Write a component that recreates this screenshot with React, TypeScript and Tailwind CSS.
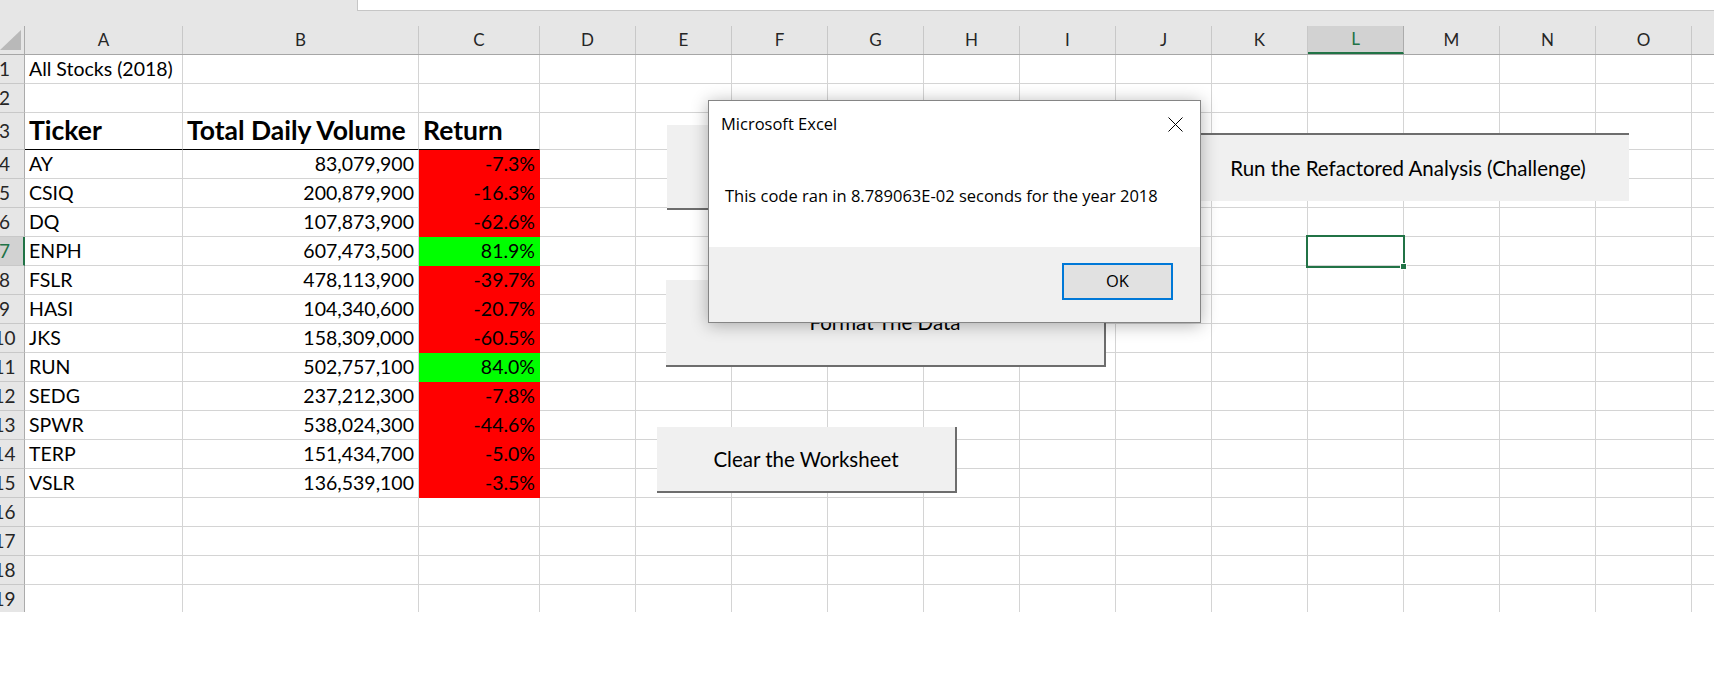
import React from 'react';

type Stock = { ticker: string; volume: string; ret: string; up?: boolean };

const STOCKS: Stock[] = [
  { ticker: 'AY', volume: '83,079,900', ret: '-7.3%' },
  { ticker: 'CSIQ', volume: '200,879,900', ret: '-16.3%' },
  { ticker: 'DQ', volume: '107,873,900', ret: '-62.6%' },
  { ticker: 'ENPH', volume: '607,473,500', ret: '81.9%', up: true },
  { ticker: 'FSLR', volume: '478,113,900', ret: '-39.7%' },
  { ticker: 'HASI', volume: '104,340,600', ret: '-20.7%' },
  { ticker: 'JKS', volume: '158,309,000', ret: '-60.5%' },
  { ticker: 'RUN', volume: '502,757,100', ret: '84.0%', up: true },
  { ticker: 'SEDG', volume: '237,212,300', ret: '-7.8%' },
  { ticker: 'SPWR', volume: '538,024,300', ret: '-44.6%' },
  { ticker: 'TERP', volume: '151,434,700', ret: '-5.0%' },
  { ticker: 'VSLR', volume: '136,539,100', ret: '-3.5%' },
];

// D..O share the same width
const EMPTY_COLS = ['D', 'E', 'F', 'G', 'H', 'I', 'J', 'K', 'L', 'M', 'N', 'O'];

const GRID = 'border-r border-b border-r-[#d4d4d4] border-b-[#d4d4d4]';

function RowHeader({ n, active }: { n: number; active?: boolean }) {
  return (
    <div
      className={`w-[25px] shrink-0 overflow-hidden border-b border-b-[#c8c8c8] text-[19px] ${
        active
          ? 'bg-[#d2d2d2] border-r-2 border-r-[#217346] text-[#217346]'
          : 'bg-[#e6e6e6] border-r border-r-[#ababab] text-[#262626]'
      }`}
    >
      <div className="w-[9px] h-full flex items-center justify-center whitespace-nowrap">{n}</div>
    </div>
  );
}

function EmptyCells({ n }: { n: number }) {
  return (
    <>
      {EMPTY_COLS.map((c) => (
        <div key={c + n} className={`w-[96px] shrink-0 ${GRID}`} />
      ))}
      <div className="flex-1 border-b border-b-[#d4d4d4]" />
    </>
  );
}

function SheetRow({ n, children, tall }: { n: number; children?: React.ReactNode; tall?: boolean }) {
  return (
    <div className={`flex ${tall ? 'h-[37px]' : 'h-[29px]'}`}>
      <RowHeader n={n} active={n === 7} />
      {children ?? (
        <>
          <div className={`w-[158px] shrink-0 ${GRID}`} />
          <div className={`w-[236px] shrink-0 ${GRID}`} />
          <div className={`w-[121px] shrink-0 ${GRID}`} />
        </>
      )}
      <EmptyCells n={n} />
    </div>
  );
}

function SheetButton({ className, label, edge }: { className: string; label?: string; edge: 'br' | 't' }) {
  return (
    <div
      className={`absolute bg-[#f0f0f0] flex items-center justify-center text-[20.5px] text-black ${
        edge === 'br' ? 'border-r-2 border-b-2 border-[#6d6d6d]' : 'border-t-2 border-[#6d6d6d]'
      } ${className}`}
    >
      {label}
    </div>
  );
}

export default function App() {
  return (
    <div className="relative w-[1714px] h-[689px] overflow-hidden bg-white font-['Lato',sans-serif] text-black">
      {/* ribbon remnant + formula box */}
      <div className="h-[26px] bg-[#e6e6e6] flex">
        <div className="w-[357px] shrink-0" />
        <div className="flex-1 h-[11px] bg-white border-l border-b border-[#c6c6c6]" />
      </div>

      <div className="h-[586px] overflow-hidden">
        {/* column headers */}
        <div className="flex h-[29px] bg-[#e6e6e6] border-b border-b-[#a6a6a6] text-[17px] text-[#262626]">
          <div className="w-[25px] shrink-0 border-r border-r-[#ababab] relative">
            <svg className="absolute left-0 top-[4px]" width="21" height="20" viewBox="0 0 21 20">
              <polygon points="21,0 21,20 0,20" fill="#b9b9b9" />
            </svg>
          </div>
          <div className="w-[158px] shrink-0 border-r border-r-[#c8c8c8] flex items-center justify-center">A</div>
          <div className="w-[236px] shrink-0 border-r border-r-[#c8c8c8] flex items-center justify-center">B</div>
          <div className="w-[121px] shrink-0 border-r border-r-[#c8c8c8] flex items-center justify-center">C</div>
          {EMPTY_COLS.map((c) =>
            c === 'L' ? (
              <div
                key={c}
                className="w-[96px] shrink-0 bg-[#d2d2d2] border-r border-r-[#ababab] border-b-2 border-b-[#217346] text-[#217346] flex items-center justify-center"
              >
                {c}
              </div>
            ) : (
              <div key={c} className="w-[96px] shrink-0 border-r border-r-[#c8c8c8] flex items-center justify-center">
                {c}
              </div>
            )
          )}
          <div className="flex-1" />
        </div>

        <div className="text-[19.5px]">
          <SheetRow n={1}>
            <div className={`w-[158px] shrink-0 ${GRID} flex items-center px-[4px] whitespace-nowrap overflow-visible`}>
              All Stocks (2018)
            </div>
            <div className={`w-[236px] shrink-0 ${GRID}`} />
            <div className={`w-[121px] shrink-0 ${GRID}`} />
          </SheetRow>
          <SheetRow n={2} />
          <SheetRow n={3} tall>
            <div className="w-[158px] shrink-0 border-r border-b border-r-[#d4d4d4] border-b-black flex items-center px-[4px] text-[26.5px] font-bold">
              Ticker
            </div>
            <div className="w-[236px] shrink-0 border-r border-b border-r-[#d4d4d4] border-b-black flex items-center px-[4px] text-[26.5px] font-bold whitespace-nowrap">
              Total Daily Volume
            </div>
            <div className="w-[121px] shrink-0 border-r border-b border-r-[#d4d4d4] border-b-black flex items-center px-[4px] text-[26.5px] font-bold">
              Return
            </div>
          </SheetRow>
          {STOCKS.map((s, i) => (
            <SheetRow key={s.ticker} n={i + 4}>
              <div className={`w-[158px] shrink-0 ${GRID} flex items-center px-[4px]`}>{s.ticker}</div>
              <div className={`w-[236px] shrink-0 ${GRID} flex items-center justify-end px-[4px]`}>{s.volume}</div>
              <div
                className={`w-[121px] shrink-0 border-r border-b flex items-center justify-end px-[4px] ${
                  s.up
                    ? 'bg-[#00ff00] border-r-[#00ff00] border-b-[#00ff00]'
                    : 'bg-[#ff0000] border-r-[#ff0000] border-b-[#ff0000]'
                }`}
              >
                {s.ret}
              </div>
            </SheetRow>
          ))}
          {[16, 17, 18, 19].map((n) => (
            <SheetRow key={n} n={n} />
          ))}
        </div>
      </div>

      {/* selected cell L7 */}
      <div className="absolute left-[1306px] top-[235px] w-[99px] h-[33px] border-2 border-[#217346]">
        <div className="absolute -right-[4px] -bottom-[4px] w-[7px] h-[7px] bg-[#217346] border border-white" />
      </div>

      {/* form buttons floating on the sheet */}
      <SheetButton className="left-[667px] top-[125px] w-[440px] h-[85px]" edge="br" />
      <SheetButton className="left-[1187px] top-[133px] w-[442px] h-[68px]" edge="t" label="Run the Refactored Analysis (Challenge)" />
      <SheetButton className="left-[666px] top-[280px] w-[440px] h-[87px]" edge="br" label="Format The Data" />
      <SheetButton className="left-[657px] top-[427px] w-[300px] h-[66px]" edge="br" label="Clear the Worksheet" />

      {/* message box */}
      <div className="absolute left-[708px] top-[100px] w-[493px] h-[223px] bg-white border border-[#858585] shadow-[0_2px_16px_rgba(0,0,0,0.3)] flex flex-col font-['Open_Sans',sans-serif] text-[16.5px] text-black">
        <div className="flex-1">
          <div className="flex items-center justify-between h-[46px] pl-[12px] pr-[17px]">
            <span>Microsoft Excel</span>
            <svg width="15" height="15" viewBox="0 0 15 15">
              <path d="M0.5 0.5 L14.5 14.5 M14.5 0.5 L0.5 14.5" stroke="#000" strokeWidth="1" />
            </svg>
          </div>
          <div className="mt-[38px] pl-[16px] leading-[22px]">This code ran in 8.789063E-02 seconds for the year 2018</div>
        </div>
        <div className="h-[75px] bg-[#f0f0f0] flex items-start justify-end pt-[16px] pr-[27px]">
          <button className="w-[111px] h-[37px] border-2 border-[#0078d7] bg-[#e1e1e1] flex items-center justify-center">
            OK
          </button>
        </div>
      </div>
    </div>
  );
}
